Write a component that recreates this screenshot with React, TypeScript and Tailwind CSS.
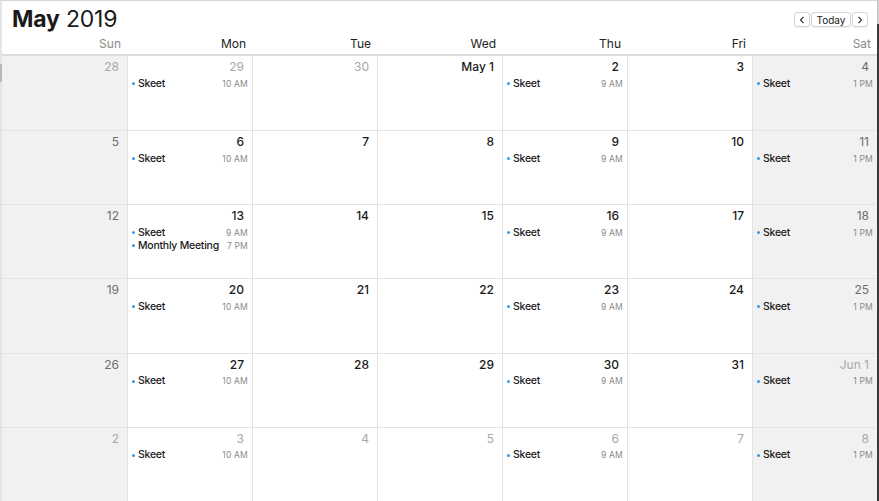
import React from "react";

type Ev = { t: string; time: string };
type Cell = { label: string; muted: boolean; events: Ev[] };

const sk10 = [{ t: "Skeet", time: "10 AM" }];
const sk9 = [{ t: "Skeet", time: "9 AM" }];
const sk1 = [{ t: "Skeet", time: "1 PM" }];

function week(labels: string[], muted: boolean[], mon: Ev[] = sk10): Cell[] {
  const evs: Ev[][] = [[], mon, [], [], sk9, [], sk1];
  return labels.map((l, i) => ({ label: l, muted: muted[i], events: evs[i] }));
}

const F = false;
const T = true;

const weeks: Cell[][] = [
  week(["28", "29", "30", "May 1", "2", "3", "4"], [T, T, T, F, F, F, F]),
  week(["5", "6", "7", "8", "9", "10", "11"], [F, F, F, F, F, F, F]),
  week(["12", "13", "14", "15", "16", "17", "18"], [F, F, F, F, F, F, F], [
    { t: "Skeet", time: "9 AM" },
    { t: "Monthly Meeting", time: "7 PM" },
  ]),
  week(["19", "20", "21", "22", "23", "24", "25"], [F, F, F, F, F, F, F]),
  week(["26", "27", "28", "29", "30", "31", "Jun 1"], [F, F, F, F, F, F, T]),
  week(["2", "3", "4", "5", "6", "7", "8"], [T, T, T, T, T, T, T]),
];

const days = ["Sun", "Mon", "Tue", "Wed", "Thu", "Fri", "Sat"];

export default function App() {
  return (
    <div
      className="w-[879px] h-[501px] flex bg-white overflow-hidden"
      style={{ fontFamily: "Inter, 'Liberation Sans', sans-serif" }}
    >
      <div className="relative flex-1 flex flex-col border-t border-t-[#d8d8d8] border-l-2 border-l-[#e4e4e4]">
        <div className="absolute left-[-2px] top-[63px] w-[2px] h-[18px] bg-[#b8b8b8]" />
        <div className="h-[35px] flex items-center justify-between pl-[10px] pr-[8px]">
          <div className="text-[23px] leading-none text-[#1a1a1a] tracking-[-0.2px] mt-[2px]">
            <span className="font-bold">May</span>
            <span className="font-normal"> 2019</span>
          </div>
          <div className="flex items-center gap-[1px] mt-[2px] mr-[1px]">
            <button className="w-[16px] h-[15px] flex items-center justify-center border border-[#d4d4d4] rounded-[3px] bg-white shadow-[0_1px_0_rgba(0,0,0,0.05)]">
              <svg width="6" height="8" viewBox="0 0 6 8">
                <path d="M4.5 0.8 L1.5 4 L4.5 7.2" fill="none" stroke="#333" strokeWidth="1.2" />
              </svg>
            </button>
            <button className="w-[40px] h-[15px] flex items-center justify-center border border-[#d4d4d4] rounded-[3px] bg-white text-[10px] leading-none text-[#222] shadow-[0_1px_0_rgba(0,0,0,0.05)]">
              Today
            </button>
            <button className="w-[16px] h-[15px] flex items-center justify-center border border-[#d4d4d4] rounded-[3px] bg-white shadow-[0_1px_0_rgba(0,0,0,0.05)]">
              <svg width="6" height="8" viewBox="0 0 6 8">
                <path d="M1.5 0.8 L4.5 4 L1.5 7.2" fill="none" stroke="#333" strokeWidth="1.2" />
              </svg>
            </button>
          </div>
        </div>
        <div className="h-[20px] grid grid-cols-7 border-b-2 border-b-[#dcdcdc]">
          {days.map((d, i) => (
            <div
              key={d}
              className={`text-right pr-[6px] text-[12px] leading-[16px] ${
                i === 0 || i === 6 ? "text-[#8a8a8a]" : "text-[#222]"
              }`}
            >
              {d}
            </div>
          ))}
        </div>
        <div className="flex-1 grid grid-cols-7 grid-rows-6">
          {weeks.map((w, ri) =>
            w.map((c, ci) => {
              const weekend = ci === 0 || ci === 6;
              const numColor = c.muted
                ? "text-[#a8a8a8]"
                : weekend
                ? "text-[#6e6e6e]"
                : "text-[#1a1a1a]";
              return (
                <div
                  key={`${ri}-${ci}`}
                  className={`flex flex-col ${weekend ? "bg-[#f1f1f1]" : "bg-white"} ${
                    ri > 0 ? "border-t border-t-[#e3e3e3]" : ""
                  } ${ci > 0 ? "border-l border-l-[#e3e3e3]" : ""}`}
                >
                  <div
                    className={`text-right pr-[8px] pt-[3px] text-[12px] leading-[16px] ${numColor} ${
                      !c.muted && !weekend ? "font-medium" : ""
                    }`}
                  >
                    {c.label}
                  </div>
                  <div className="mt-[2px] flex flex-col">
                    {c.events.map((e, k) => (
                      <div key={k} className="flex items-center h-[13px] pl-[4px] pr-[4px]">
                        <span className="w-[3px] h-[3px] rounded-full bg-[#2d9cf0] mr-[3px]" />
                        <div className="flex-1 flex items-baseline">
                          <span className="flex-1 text-[10.5px] leading-[13px] text-[#1a1a1a] font-medium tracking-[-0.25px]">
                            {e.t}
                          </span>
                          <span className="text-[8.5px] leading-[13px] text-[#8a8a8a] tracking-[0.2px]">
                            {e.time}
                          </span>
                        </div>
                      </div>
                    ))}
                  </div>
                </div>
              );
            })
          )}
        </div>
      </div>
      <div className="w-[2px] h-full flex flex-col">
        <div className="h-[24px] bg-[#c9c9c9]" />
        <div className="flex-1 bg-[#3a3a3a]" />
      </div>
    </div>
  );
}
